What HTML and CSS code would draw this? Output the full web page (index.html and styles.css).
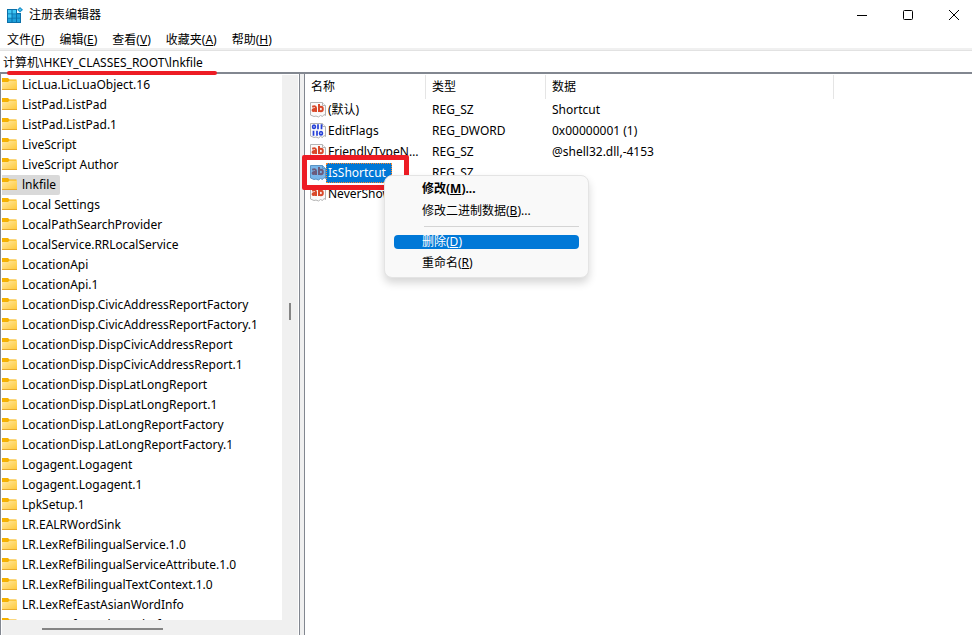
FILE: index.html
```html
<!DOCTYPE html>
<html lang="zh-CN">
<head>
<meta charset="utf-8">
<title>注册表编辑器</title>
<link rel="stylesheet" href="styles.css">
</head>
<body>
<svg class="defs" aria-hidden="true">
  <defs>
    <linearGradient id="fg" x1="0" y1="0" x2="1" y2="1">
      <stop offset="0" stop-color="#ffe9a3"/><stop offset="1" stop-color="#ffc93a"/>
    </linearGradient>
    <symbol id="folder" viewBox="0 0 16 16">
      <path d="M0 1h6l1.500 1.500H14.500V6H0z" fill="#f5b000"/>
      <path d="M0 5h6L7.500 3.500H14.500Q15 3.500 15 4V12.500H0z" fill="url(#fg)"/>
      <path d="M0 12.500h15" stroke="#e9ab2c" stroke-width="1"/>
    </symbol>
    <symbol id="page" viewBox="0 0 16 16">
      <path class="paper" d="M.5 .5h12l3 3v10l-1.500-1-1.500 2-2-1-2 1.500-2.500-1-2 .5-3.500-1.500z"/>
      <path class="paper" d="M12.500 .5v3h3"/>
    </symbol>
    <symbol id="string" viewBox="0 0 16 16">
      <use href="#page"/>
      <g class="letters">
        <path d="M2.200 4.700Q6 3.500 6 6V10M6 6.800Q2.600 6.700 2.600 8.200Q3 9.900 6 8.200"/>
        <path d="M9 2V10"/><ellipse cx="10.900" cy="7" rx="1.900" ry="2.200"/>
      </g>
    </symbol>
    <symbol id="binary" viewBox="0 0 16 16">
      <use href="#page"/>
      <g class="digits">
        <ellipse cx="4" cy="3.800" rx="1.400" ry="1.700"/><path d="M8 1.300v5M11.500 1.300v5M3.500 7.700v5M7 7.700v5"/>
        <ellipse cx="11" cy="10.200" rx="1.400" ry="1.700"/>
      </g>
    </symbol>
  </defs>
</svg>
<div class="window">
  <header class="titlebar">
    <svg class="app-icon" viewBox="0 0 16 16" aria-hidden="true">
      <path d="M0 2h10v4h4v10H0z" fill="#0b6fa8"/>
      <path d="M1 3h3.500v3.500H1zM5.500 3H9v3.500H5.500zM1 7.300h3.500v3.500H1z" fill="#41c8f5"/>
      <path d="M5.500 7.300H9v3.500H5.500zM10 7.300h3v3.500h-3zM1 11.600h3.500V15H1zM5.500 11.600H9V15H5.500zM10 11.600h3V15h-3z" fill="#1ea0da"/>
      <path d="M13 0l3 2.700-3 2.800-2.800-2.800z" fill="#1a8fcb"/><path d="M13 1.500l1.300 1.200L13 4l-1.200-1.300z" fill="#5cd0f5"/>
    </svg>
    <h1 class="title">注册表编辑器</h1>
    <div class="window-buttons">
      <button type="button" aria-label="最小化"><svg viewBox="0 0 10 10"><path d="M0 5.500h10"/></svg></button>
      <button type="button" aria-label="最大化"><svg viewBox="0 0 10 10"><rect x=".5" y=".5" width="9" height="9" rx="1"/></svg></button>
      <button type="button" aria-label="关闭"><svg viewBox="0 0 10 10"><path d="M0 0l10 10M10 0L0 10"/></svg></button>
    </div>
  </header>
  <nav class="menubar">
    <button type="button">文件(<u>F</u>)</button>
    <button type="button">编辑(<u>E</u>)</button>
    <button type="button">查看(<u>V</u>)</button>
    <button type="button">收藏夹(<u>A</u>)</button>
    <button type="button">帮助(<u>H</u>)</button>
  </nav>
  <div class="address">
    <input type="text" aria-label="地址" value="计算机\HKEY_CLASSES_ROOT\lnkfile">
    <span class="mark-line"></span>
  </div>
  <main class="panes">
    <section class="tree-pane">
      <ul class="tree">
        <li><svg><use href="#folder"/></svg><span>LicLua.LicLuaObject.16</span></li>
        <li><svg><use href="#folder"/></svg><span>ListPad.ListPad</span></li>
        <li><svg><use href="#folder"/></svg><span>ListPad.ListPad.1</span></li>
        <li><svg><use href="#folder"/></svg><span>LiveScript</span></li>
        <li><svg><use href="#folder"/></svg><span>LiveScript Author</span></li>
        <li class="selected"><svg><use href="#folder"/></svg><span>lnkfile</span></li>
        <li><svg><use href="#folder"/></svg><span>Local Settings</span></li>
        <li><svg><use href="#folder"/></svg><span>LocalPathSearchProvider</span></li>
        <li><svg><use href="#folder"/></svg><span>LocalService.RRLocalService</span></li>
        <li><svg><use href="#folder"/></svg><span>LocationApi</span></li>
        <li><svg><use href="#folder"/></svg><span>LocationApi.1</span></li>
        <li><svg><use href="#folder"/></svg><span>LocationDisp.CivicAddressReportFactory</span></li>
        <li><svg><use href="#folder"/></svg><span>LocationDisp.CivicAddressReportFactory.1</span></li>
        <li><svg><use href="#folder"/></svg><span>LocationDisp.DispCivicAddressReport</span></li>
        <li><svg><use href="#folder"/></svg><span>LocationDisp.DispCivicAddressReport.1</span></li>
        <li><svg><use href="#folder"/></svg><span>LocationDisp.DispLatLongReport</span></li>
        <li><svg><use href="#folder"/></svg><span>LocationDisp.DispLatLongReport.1</span></li>
        <li><svg><use href="#folder"/></svg><span>LocationDisp.LatLongReportFactory</span></li>
        <li><svg><use href="#folder"/></svg><span>LocationDisp.LatLongReportFactory.1</span></li>
        <li><svg><use href="#folder"/></svg><span>Logagent.Logagent</span></li>
        <li><svg><use href="#folder"/></svg><span>Logagent.Logagent.1</span></li>
        <li><svg><use href="#folder"/></svg><span>LpkSetup.1</span></li>
        <li><svg><use href="#folder"/></svg><span>LR.EALRWordSink</span></li>
        <li><svg><use href="#folder"/></svg><span>LR.LexRefBilingualService.1.0</span></li>
        <li><svg><use href="#folder"/></svg><span>LR.LexRefBilingualServiceAttribute.1.0</span></li>
        <li><svg><use href="#folder"/></svg><span>LR.LexRefBilingualTextContext.1.0</span></li>
        <li><svg><use href="#folder"/></svg><span>LR.LexRefEastAsianWordInfo</span></li>
        <li><svg><use href="#folder"/></svg><span>LR.LexRefFrenchWordInfo</span></li>
      </ul>
      <div class="vscroll"><span></span></div>
      <div class="hscroll"><span></span></div>
    </section>
    <div class="splitter"></div>
    <section class="list-pane">
      <table class="values">
        <colgroup><col class="c-name"><col class="c-type"><col class="c-data"><col></colgroup>
        <thead><tr><th>名称</th><th>类型</th><th>数据</th><td></td></tr></thead>
        <tbody>
          <tr><td><div class="name"><svg><use href="#string"/></svg><span>(默认)</span></div></td><td>REG_SZ</td><td>Shortcut</td></tr>
          <tr><td><div class="name"><svg><use href="#binary"/></svg><span>EditFlags</span></div></td><td>REG_DWORD</td><td>0x00000001 (1)</td></tr>
          <tr><td><div class="name"><svg><use href="#string"/></svg><span>FriendlyTypeName</span></div></td><td>REG_SZ</td><td>@shell32.dll,-4153</td></tr>
          <tr class="current"><td><div class="name"><svg><use href="#string"/></svg><span>IsShortcut</span></div></td><td>REG_SZ</td><td></td></tr>
          <tr><td><div class="name"><svg><use href="#string"/></svg><span>NeverShowExt</span></div></td><td></td><td></td></tr>
        </tbody>
      </table>
      <span class="mark-box"></span>
      <div class="context-menu">
        <button type="button" class="default">修改(<u>M</u>)...</button>
        <button type="button">修改二进制数据(<u>B</u>)...</button>
        <hr>
        <button type="button" class="active">删除(<u>D</u>)</button>
        <button type="button">重命名(<u>R</u>)</button>
      </div>
    </section>
  </main>
</div>
</body>
</html>
```
FILE: styles.css
```css
* { box-sizing: border-box; }
body {
  margin: 0;
  background: #fff;
  color: #000;
  font: 12px/20px "Noto Sans", "Noto Sans CJK SC", sans-serif;
}
button, input { font: inherit; color: inherit; border: 0; background: none; padding: 0; margin: 0; }
.defs { position: absolute; width: 0; height: 0; }
.paper { fill: var(--paper, #fafafa); stroke: var(--paper-edge, #b4b4b4); }
.letters { fill: none; stroke: var(--letters, #d9492a); stroke-width: 2; }
.digits { fill: none; stroke: #2540d8; stroke-width: 1.7; }
.window { display: flex; flex-direction: column; height: 100vh; overflow: hidden; }

.titlebar { display: flex; align-items: center; flex: none; height: 29px; padding-left: 7px; }
.app-icon { width: 16px; height: 16px; margin-right: 6px; }
.title { margin: 0; font-size: 12px; font-weight: 400; flex: 1; }
.window-buttons { display: flex; margin-right: -5px; }
.window-buttons button { display: flex; align-items: center; justify-content: center; width: 46px; height: 28px; }
.window-buttons svg { width: 10px; height: 10px; fill: none; stroke: #000; overflow: visible; }

.menubar { display: flex; flex: none; gap: 15px; height: 19px; padding: 1px 0 0 7px; }
.menubar button { height: 20px; }

.address { position: relative; flex: none; height: 24px; border-top: 2px solid #f0f0f0; }
.address input { display: block; width: 100%; height: 22px; padding: 0 3px; border-top: 1px solid #e2e2e2; outline: 0; }
.mark-line { position: absolute; left: 7px; top: 21px; width: 210px; height: 4px; border-radius: 2px; background: #ed1c24; z-index: 1; }

.panes { display: flex; flex: 1; min-height: 0; border-top: 2px solid #828790; }
.tree-pane {
  display: grid;
  grid-template: 1fr 15px / 1fr 16px;
  flex: none;
  width: 300px;
  padding: 1px 1px 0;
  border: solid #828790;
  border-width: 0 1px;
}
.tree { margin: 0; padding: 0; list-style: none; overflow: hidden; min-height: 0; }
.tree li { display: flex; align-items: center; width: max-content; height: 20px; padding-right: 4px; white-space: nowrap; }
.tree svg { width: 16px; height: 16px; margin-right: 4px; }
.tree .selected { background: #d9d9d9; border-radius: 0 2px 2px 0; }
.vscroll { grid-row: 1 / 3; grid-column: 2; background: #f0f0f0; display: flex; justify-content: center; padding-top: 228px; }
.vscroll span { width: 2px; height: 17px; background: #858585; }
.hscroll { background: #f0f0f0; padding: 8px 0 0 40px; }
.hscroll span { display: block; width: 121px; height: 2px; background: #858585; }
.splitter { flex: none; width: 4px; background: #f0f0f0; }

.list-pane { position: relative; flex: 1; min-width: 0; padding-top: 1px; border-left: 1px solid #828790; }
.values { width: 100%; table-layout: fixed; border-collapse: separate; border-spacing: 0; }
.c-name { width: 121px; }
.c-type { width: 120px; }
.c-data { width: 288px; }
.values th { height: 24px; padding: 0 0 0 6px; font-weight: 400; text-align: left; border-right: 1px solid #e5e5e5; }
.values td { height: 21px; padding: 0 0 0 6px; white-space: nowrap; }
.values tbody td:first-child { padding: 0 4px 0 5px; }
.name { display: flex; align-items: center; }
.name svg { flex: none; width: 16px; height: 16px; }
.name span { padding: 0 1px 0 2px; overflow: hidden; text-overflow: ellipsis; }
.current .name { --paper: #79b6ea; --paper-edge: #5b93c4; --letters: #6b5b7c; }
.current .name span { padding-right: 6px; background: #0078d7; color: #fff; outline: 1px dotted #ff8728; outline-offset: -1px; }

.mark-box { position: absolute; left: -3px; top: 81px; width: 107px; height: 35px; border: 5px solid #ed1c24; border-radius: 2px; }
.context-menu {
  position: absolute;
  left: 79px;
  top: 101px;
  width: 205px;
  padding: 2px 9px 3px;
  background: #f9f9f9;
  border: 1px solid #e4e4e4;
  border-radius: 8px;
  box-shadow: 0 5px 9px rgba(0, 0, 0, .16);
}
.context-menu button { display: block; width: 100%; height: 22px; padding-left: 28px; text-align: left; }
.context-menu .default { font-weight: 700; }
.context-menu hr { height: 1px; margin: 4px 0 8px 30px; border: 0; background: #d4d4d4; }
.context-menu .active { height: 14px; margin-bottom: 3px; border-radius: 4px; background: #0078d7; color: #fff; line-height: 14px; }
```
